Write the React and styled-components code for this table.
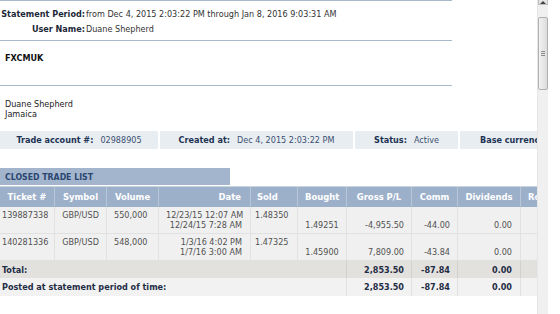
import styled, { createGlobalStyle } from "styled-components";

const GlobalStyle = createGlobalStyle`
  html, body {
    margin: 0;
    padding: 0;
    background: #fff;
  }
  body {
    font-family: "DejaVu Sans Condensed", "DejaVu Sans", sans-serif;
    font-size: 9px;
    color: #333;
  }
`;

const Page = styled.div`
  display: flex;
  width: 560px;
  height: 314px;
  overflow: hidden;
  background: #fff;
`;

const Main = styled.div`
  width: 537px;
  flex: none;
  overflow: hidden;
`;

const Header = styled.div`
  width: 452px;
  border-top: 1px solid #a9b9cc;
`;

const PeriodGrid = styled.div`
  display: grid;
  grid-template-columns: 86px auto;
  grid-auto-rows: 15px;
  align-items: center;
  padding: 5px 0 4px;
  border-bottom: 1px solid #a9b9cc;
`;

const Label = styled.div`
  text-align: right;
  font-weight: bold;
  color: #1c2838;
  padding-right: 1px;
  white-space: nowrap;
`;

const Value = styled.div`
  color: #333;
  white-space: nowrap;
`;

const Company = styled.div`
  height: 32px;
  padding: 12px 0 0 5px;
  line-height: 11px;
  font-weight: bold;
  color: #111;
  border-bottom: 1px solid #a9b9cc;
`;

const Address = styled.div`
  padding: 13px 0 12px 5px;
  line-height: 10px;
  color: #222;
`;

const InfoBar = styled.div`
  display: flex;
  gap: 2px;
  height: 18px;
`;

const InfoCell = styled.div`
  flex: none;
  width: ${(p) => p.$w}px;
  display: flex;
  align-items: center;
  justify-content: ${(p) => (p.$start ? "flex-start" : "center")};
  padding-left: ${(p) => (p.$start ? "20px" : "0")};
  gap: 7px;
  background: #e8edf2;
  white-space: nowrap;
  overflow: hidden;
`;

const InfoLabel = styled.span`
  font-weight: bold;
  color: #1d3354;
`;

const InfoValue = styled.span`
  color: #3b5070;
`;

const SectionTitle = styled.div`
  margin-top: 19px;
  border-bottom: 1px solid #c8d3e0;
  padding-bottom: 1px;
`;

const TitleTab = styled.div`
  width: 225px;
  height: 17px;
  padding-left: 5px;
  display: flex;
  align-items: center;
  background: #a3b5cd;
  color: #2b4670;
  font-weight: bold;
  font-size: 8.7px;
`;

const Table = styled.table`
  border-collapse: separate;
  border-spacing: 0;
  table-layout: fixed;
  width: 581px;
`;

const Th = styled.th`
  height: 19px;
  padding: 0 ${(p) => p.$pr ?? 7}px 0 ${(p) => p.$pl ?? 7}px;
  background: #9db0ca;
  color: #fff;
  font-weight: bold;
  font-size: 9.4px;
  text-align: ${(p) => p.$align || "center"};
  border-right: 1px solid #b9c6d7;
  border-bottom: 1px solid #9db0ca;
  white-space: nowrap;
  overflow: hidden;
`;

const Td = styled.td`
  height: 20px;
  padding: 3px ${(p) => p.$pr ?? 7}px 3px ${(p) => p.$pl ?? 7}px;
  line-height: 10px;
  background: #f0f0f0;
  color: #505050;
  text-align: ${(p) => p.$align || "left"};
  vertical-align: ${(p) => p.$valign || "top"};
  border-right: 1px solid #e1e1e1;
  border-bottom: 1px solid #e1e1e1;
  white-space: nowrap;
  overflow: hidden;
`;

const SumTd = styled.td`
  height: ${(p) => p.$h}px;
  padding: 0 ${(p) => p.$pr ?? 7}px 0 ${(p) => p.$pl ?? 7}px;
  background: ${(p) => p.$bg};
  color: #1f2d45;
  font-weight: bold;
  text-align: ${(p) => p.$align || "right"};
  border-right: 1px solid ${(p) => p.$line};
  white-space: nowrap;
  overflow: hidden;
`;

const Scrollbar = styled.div`
  width: 11px;
  flex: none;
  display: flex;
  flex-direction: column;
  align-items: center;
  background: #f0f0f0;
  border-left: 1px solid #e6e6e6;
  box-sizing: border-box;
`;

const ArrowButton = styled.div`
  width: 10px;
  height: 5px;
  display: flex;
  align-items: flex-end;
  justify-content: center;
  background: #e4e4e4;
  border: 1px solid #bdbdbd;
  border-top: none;
  box-sizing: border-box;
`;

const Thumb = styled.div`
  margin-top: 12px;
  width: 10px;
  height: 73px;
  box-sizing: border-box;
  border: 1px solid #b0b0b0;
  border-radius: 2px;
  background: linear-gradient(to right, #f2f2f2, #dcdcdc);
  display: flex;
  align-items: center;
  justify-content: center;
`;

const Grip = styled.div`
  width: 4px;
  height: 6px;
  background: repeating-linear-gradient(
    to bottom,
    #8a8a8a 0 1px,
    transparent 1px 2px
  );
`;

const RightGap = styled.div`
  flex: 1;
`;

const columns = [55, 52, 52, 92, 47, 49, 65, 46, 63, 60];

const trades = [
  {
    ticket: "139887338",
    symbol: "GBP/USD",
    volume: "550,000",
    open: "12/23/15 12:07 AM",
    close: "12/24/15 7:28 AM",
    sold: "1.48350",
    bought: "1.49251",
    gross: "-4,955.50",
    comm: "-44.00",
    dividends: "0.00",
  },
  {
    ticket: "140281336",
    symbol: "GBP/USD",
    volume: "548,000",
    open: "1/3/16 4:02 PM",
    close: "1/7/16 3:00 AM",
    sold: "1.47325",
    bought: "1.45900",
    gross: "7,809.00",
    comm: "-43.84",
    dividends: "0.00",
  },
];

const totals = [
  { label: "Total:", bg: "#e3e1de", line: "#d3d1ce", h: 17 },
  { label: "Posted at statement period of time:", bg: "#f2f2f2", line: "#e1e1e1", h: 18 },
];

function App() {
  return (
    <>
      <GlobalStyle />
      <Page>
        <Main>
          <Header>
            <PeriodGrid>
              <Label>Statement Period:</Label>
              <Value>from Dec 4, 2015 2:03:22 PM through Jan 8, 2016 9:03:31 AM</Value>
              <Label>User Name:</Label>
              <Value>Duane Shepherd</Value>
            </PeriodGrid>
            <Company>FXCMUK</Company>
          </Header>
          <Address>
            Duane Shepherd
            <br />
            Jamaica
          </Address>
          <InfoBar>
            <InfoCell $w={158}>
              <InfoLabel>Trade account #:</InfoLabel>
              <InfoValue>02988905</InfoValue>
            </InfoCell>
            <InfoCell $w={193}>
              <InfoLabel>Created at:</InfoLabel>
              <InfoValue>Dec 4, 2015 2:03:22 PM</InfoValue>
            </InfoCell>
            <InfoCell $w={103}>
              <InfoLabel>Status:</InfoLabel>
              <InfoValue>Active</InfoValue>
            </InfoCell>
            <InfoCell $w={160} $start>
              <InfoLabel>Base currency:</InfoLabel>
              <InfoValue>USD</InfoValue>
            </InfoCell>
          </InfoBar>
          <SectionTitle>
            <TitleTab>CLOSED TRADE LIST</TitleTab>
          </SectionTitle>
          <Table>
            <colgroup>
              {columns.map((w, i) => (
                <col key={i} style={{ width: w }} />
              ))}
            </colgroup>
            <thead>
              <tr>
                <Th>Ticket #</Th>
                <Th>Symbol</Th>
                <Th>Volume</Th>
                <Th $align="right" $pr={9}>Date</Th>
                <Th $align="left" $pl={6}>Sold</Th>
                <Th>Bought</Th>
                <Th>Gross P/L</Th>
                <Th>Comm</Th>
                <Th>Dividends</Th>
                <Th $align="left">Rollover</Th>
              </tr>
            </thead>
            <tbody>
              {trades.map((t) => (
                <tr key={t.ticket}>
                  <Td $pl={2} $pr={0}>{t.ticket}</Td>
                  <Td $align="center" $pl={0} $pr={0}>{t.symbol}</Td>
                  <Td>{t.volume}</Td>
                  <Td $align="right" $pr={8}>
                    {t.open}
                    <br />
                    {t.close}
                  </Td>
                  <Td $pl={4}>{t.sold}</Td>
                  <Td $align="center" $valign="bottom" $pl={0} $pr={0}>{t.bought}</Td>
                  <Td $align="right" $valign="bottom">{t.gross}</Td>
                  <Td $align="right" $valign="bottom">{t.comm}</Td>
                  <Td $align="right" $valign="bottom" $pr={8}>{t.dividends}</Td>
                  <Td $align="right" $valign="bottom">0.00</Td>
                </tr>
              ))}
              {totals.map((r) => (
                <tr key={r.label}>
                  <SumTd colSpan={6} $align="left" $pl={2} $bg={r.bg} $line={r.line} $h={r.h}>
                    {r.label}
                  </SumTd>
                  <SumTd $bg={r.bg} $line={r.line} $h={r.h}>2,853.50</SumTd>
                  <SumTd $bg={r.bg} $line={r.line} $h={r.h}>-87.84</SumTd>
                  <SumTd $bg={r.bg} $line={r.line} $h={r.h} $pr={8}>0.00</SumTd>
                  <SumTd $bg={r.bg} $line={r.line} $h={r.h}>0.00</SumTd>
                </tr>
              ))}
            </tbody>
          </Table>
        </Main>
        <Scrollbar>
          <ArrowButton>
            <svg width="6" height="3" viewBox="0 0 6 3">
              <path d="M0 3 L3 0 L6 3 Z" fill="#444" />
            </svg>
          </ArrowButton>
          <Thumb>
            <Grip />
          </Thumb>
        </Scrollbar>
        <RightGap />
      </Page>
    </>
  );
}

export default App;
